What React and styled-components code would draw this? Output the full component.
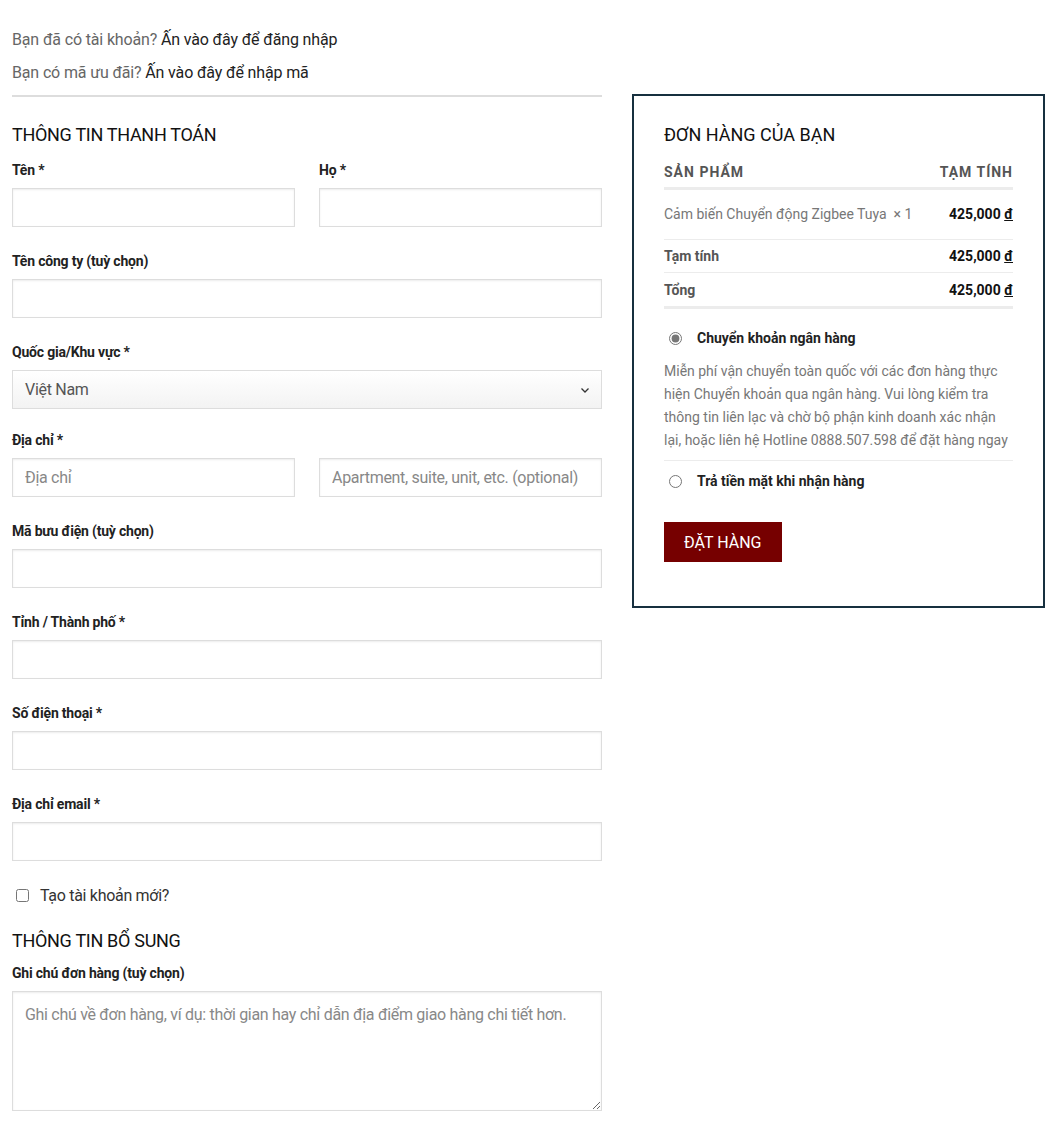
import styled, { createGlobalStyle } from "styled-components";

const GlobalStyle = createGlobalStyle`
  body {
    margin: 0;
    background: #fff;
    font-family: Roboto, "Liberation Sans", sans-serif;
    color: #333;
  }
  * { box-sizing: border-box; }
`;

const Page = styled.div`
  display: grid;
  grid-template-columns: 590px 413px;
  column-gap: 30px;
  padding: 0 13px 0 12px;
`;

const LeftColumn = styled.div`
  display: flex;
  flex-direction: column;
`;

const Notice = styled.p`
  margin: 0;
  font-size: 16px;
  line-height: 33px;
  color: #666;
  letter-spacing: -0.15px;

  a {
    color: #222;
    text-decoration: none;
  }
`;

const Notices = styled.div`
  grid-column: 1 / 3;
  padding-top: 23px;
  width: 590px;
  padding-bottom: 6px;
  border-bottom: 2px solid #ddd;
`;

const SectionTitle = styled.h3`
  margin: ${({ $top }) => $top || "26px"} 0 ${({ $bottom }) => $bottom || "13px"};
  font-size: 18px;
  font-weight: 400;
  line-height: 24px;
  color: #111;
  letter-spacing: -0.3px;
`;

const FieldRow = styled.div`
  display: grid;
  grid-template-columns: ${({ $cols }) => ($cols === 2 ? "1fr 1fr" : "1fr")};
  column-gap: 24px;
  margin-bottom: ${({ $gap }) => $gap || "24px"};
`;

const Field = styled.div`
  display: flex;
  flex-direction: column;
`;

const Label = styled.label`
  font-size: 14px;
  font-weight: 700;
  line-height: 20px;
  color: #222;
  margin-bottom: 8px;
  letter-spacing: -0.2px;
  min-height: 20px;
`;

const Input = styled.input`
  height: 39px;
  width: 100%;
  border: 1px solid #ddd;
  box-shadow: inset 0 1px 2px rgba(0, 0, 0, 0.08);
  padding: 0 12px;
  font-family: Roboto, "Liberation Sans", sans-serif;
  font-size: 16px;
  color: #333;
  outline: none;
  letter-spacing: -0.3px;

  &::placeholder {
    color: #888;
  }
`;

const SelectBox = styled.div`
  height: 39px;
  border: 1px solid #ddd;
  background: linear-gradient(#fff, #f3f3f3);
  display: flex;
  align-items: center;
  justify-content: space-between;
  padding: 0 10px 0 12px;
  font-size: 16px;
  color: #555;
  letter-spacing: -0.3px;
`;

const Textarea = styled.textarea`
  width: 100%;
  height: 120px;
  border: 1px solid #ddd;
  box-shadow: inset 0 1px 2px rgba(0, 0, 0, 0.08);
  padding: 12px 12px;
  font-family: Roboto, "Liberation Sans", sans-serif;
  font-size: 16px;
  line-height: 22px;
  outline: none;
  resize: vertical;
  display: block;
  letter-spacing: -0.3px;

  &::placeholder {
    color: #888;
  }
`;

const CheckRow = styled.label`
  display: flex;
  align-items: center;
  gap: 11px;
  font-size: 16px;
  color: #333;
  margin: 1px 0 0 4px;
  letter-spacing: -0.3px;

  input {
    margin: 0;
    width: 13px;
    height: 13px;
  }
`;

const OrderBox = styled.div`
  border: 2px solid #17303f;
  padding: 24px 30px 44px;
  align-self: start;
  margin-top: -3px;
  height: 514px;
`;

const OrderTitle = styled.h3`
  margin: 3px 0 13px;
  font-size: 18px;
  font-weight: 400;
  line-height: 24px;
  color: #111;
`;

const Table = styled.table`
  width: 100%;
  border-collapse: collapse;
  font-size: 14px;

  th {
    text-align: left;
    font-weight: 700;
    letter-spacing: 1px;
    text-transform: uppercase;
    color: #555;
    padding: 4px 0 7px;
    border-bottom: 3px solid #ececec;
  }

  th:last-child,
  td:last-child {
    text-align: right;
  }
`;

const Cell = styled.td`
  padding: ${({ $pad }) => $pad || "8px 0"};
  border-bottom: ${({ $thick }) => ($thick ? "3px solid #ececec" : "1px solid #ececec")};
  color: ${({ $muted }) => ($muted ? "#777" : "#111")};
  font-weight: ${({ $bold }) => ($bold ? 700 : 400)};
  line-height: 17px;
  white-space: nowrap;
`;

const RowLabel = styled.span`
  font-weight: 700;
  color: #555;
`;

const Currency = styled.span`
  text-decoration: underline;
`;

const Payments = styled.div`
  display: flex;
  flex-direction: column;
  padding-top: 19px;
`;

const PaymentOption = styled.label`
  display: flex;
  align-items: center;
  gap: 15px;
  font-size: 14px;
  font-weight: 700;
  color: #222;
  line-height: 20px;
  padding-left: 5px;

  input {
    margin: 0;
    width: 13px;
    height: 13px;
    accent-color: #777;
  }
`;

const PaymentNote = styled.p`
  margin: 12px 0 10px;
  padding-bottom: 8px;
  font-size: 14px;
  line-height: 23px;
  color: #777;
  border-bottom: 1px solid #ececec;
`;

const OrderButton = styled.button`
  margin-top: 31px;
  align-self: flex-start;
  background: #760000;
  color: #fff;
  border: none;
  height: 40px;
  padding: 0 20px;
  font-family: Roboto, "Liberation Sans", sans-serif;
  font-size: 16px;
  text-transform: uppercase;
  cursor: pointer;
`;

const Chevron = () => (
  <svg width="12" height="12" viewBox="0 0 12 12" fill="none">
    <path d="M2.5 4.5 6 8l3.5-3.5" stroke="#333" strokeWidth="1.3" />
  </svg>
);

const Amount = ({ value }) => (
  <>
    {value} <Currency>đ</Currency>
  </>
);

export default function App() {
  return (
    <>
      <GlobalStyle />
      <Page>
        <Notices>
          <Notice>
            Bạn đã có tài khoản? <a href="#">Ấn vào đây để đăng nhập</a>
          </Notice>
          <Notice>
            Bạn có mã ưu đãi? <a href="#">Ấn vào đây để nhập mã</a>
          </Notice>
        </Notices>

        <LeftColumn>
          <SectionTitle>THÔNG TIN THANH TOÁN</SectionTitle>
          <FieldRow $cols={2}>
            <Field>
              <Label>Tên *</Label>
              <Input />
            </Field>
            <Field>
              <Label>Họ *</Label>
              <Input />
            </Field>
          </FieldRow>
          <FieldRow>
            <Field>
              <Label>Tên công ty (tuỳ chọn)</Label>
              <Input />
            </Field>
          </FieldRow>
          <FieldRow $gap="21px">
            <Field>
              <Label>Quốc gia/Khu vực *</Label>
              <SelectBox>
                Việt Nam
                <Chevron />
              </SelectBox>
            </Field>
          </FieldRow>
          <FieldRow $cols={2}>
            <Field>
              <Label>Địa chỉ *</Label>
              <Input placeholder="Địa chỉ" />
            </Field>
            <Field>
              <Label />
              <Input placeholder="Apartment, suite, unit, etc. (optional)" />
            </Field>
          </FieldRow>
          <FieldRow>
            <Field>
              <Label>Mã bưu điện (tuỳ chọn)</Label>
              <Input />
            </Field>
          </FieldRow>
          <FieldRow>
            <Field>
              <Label>Tỉnh / Thành phố *</Label>
              <Input />
            </Field>
          </FieldRow>
          <FieldRow>
            <Field>
              <Label>Số điện thoại *</Label>
              <Input />
            </Field>
          </FieldRow>
          <FieldRow>
            <Field>
              <Label>Địa chỉ email *</Label>
              <Input />
            </Field>
          </FieldRow>
          <CheckRow>
            <input type="checkbox" />
            Tạo tài khoản mới?
          </CheckRow>
          <SectionTitle $top="24px" $bottom="10px">
            THÔNG TIN BỔ SUNG
          </SectionTitle>
          <Field>
            <Label>Ghi chú đơn hàng (tuỳ chọn)</Label>
            <Textarea placeholder="Ghi chú về đơn hàng, ví dụ: thời gian hay chỉ dẫn địa điểm giao hàng chi tiết hơn." />
          </Field>
        </LeftColumn>

        <OrderBox>
          <OrderTitle>ĐƠN HÀNG CỦA BẠN</OrderTitle>
          <Table>
            <thead>
              <tr>
                <th>Sản phẩm</th>
                <th>Tạm tính</th>
              </tr>
            </thead>
            <tbody>
              <tr>
                <Cell $muted $pad="16px 0 16px">
                  Cảm biến Chuyển động Zigbee Tuya&nbsp; × 1
                </Cell>
                <Cell $bold $pad="16px 0 16px">
                  <Amount value="425,000" />
                </Cell>
              </tr>
              <tr>
                <Cell $pad="8px 0 7px">
                  <RowLabel>Tạm tính</RowLabel>
                </Cell>
                <Cell $bold $pad="8px 0 7px">
                  <Amount value="425,000" />
                </Cell>
              </tr>
              <tr>
                <Cell $thick $pad="9px 0 7px">
                  <RowLabel>Tổng</RowLabel>
                </Cell>
                <Cell $thick $bold $pad="9px 0 7px">
                  <Amount value="425,000" />
                </Cell>
              </tr>
            </tbody>
          </Table>
          <Payments>
            <PaymentOption>
              <input type="radio" name="pay" defaultChecked />
              Chuyển khoản ngân hàng
            </PaymentOption>
            <PaymentNote>
              Miễn phí vận chuyển toàn quốc với các đơn hàng thực hiện Chuyển
              khoản qua ngân hàng. Vui lòng kiểm tra thông tin liên lạc và chờ
              bộ phận kinh doanh xác nhận lại, hoặc liên hệ Hotline
              0888.507.598 để đặt hàng ngay
            </PaymentNote>
            <PaymentOption>
              <input type="radio" name="pay" />
              Trả tiền mặt khi nhận hàng
            </PaymentOption>
            <OrderButton>Đặt hàng</OrderButton>
          </Payments>
        </OrderBox>
      </Page>
    </>
  );
}
